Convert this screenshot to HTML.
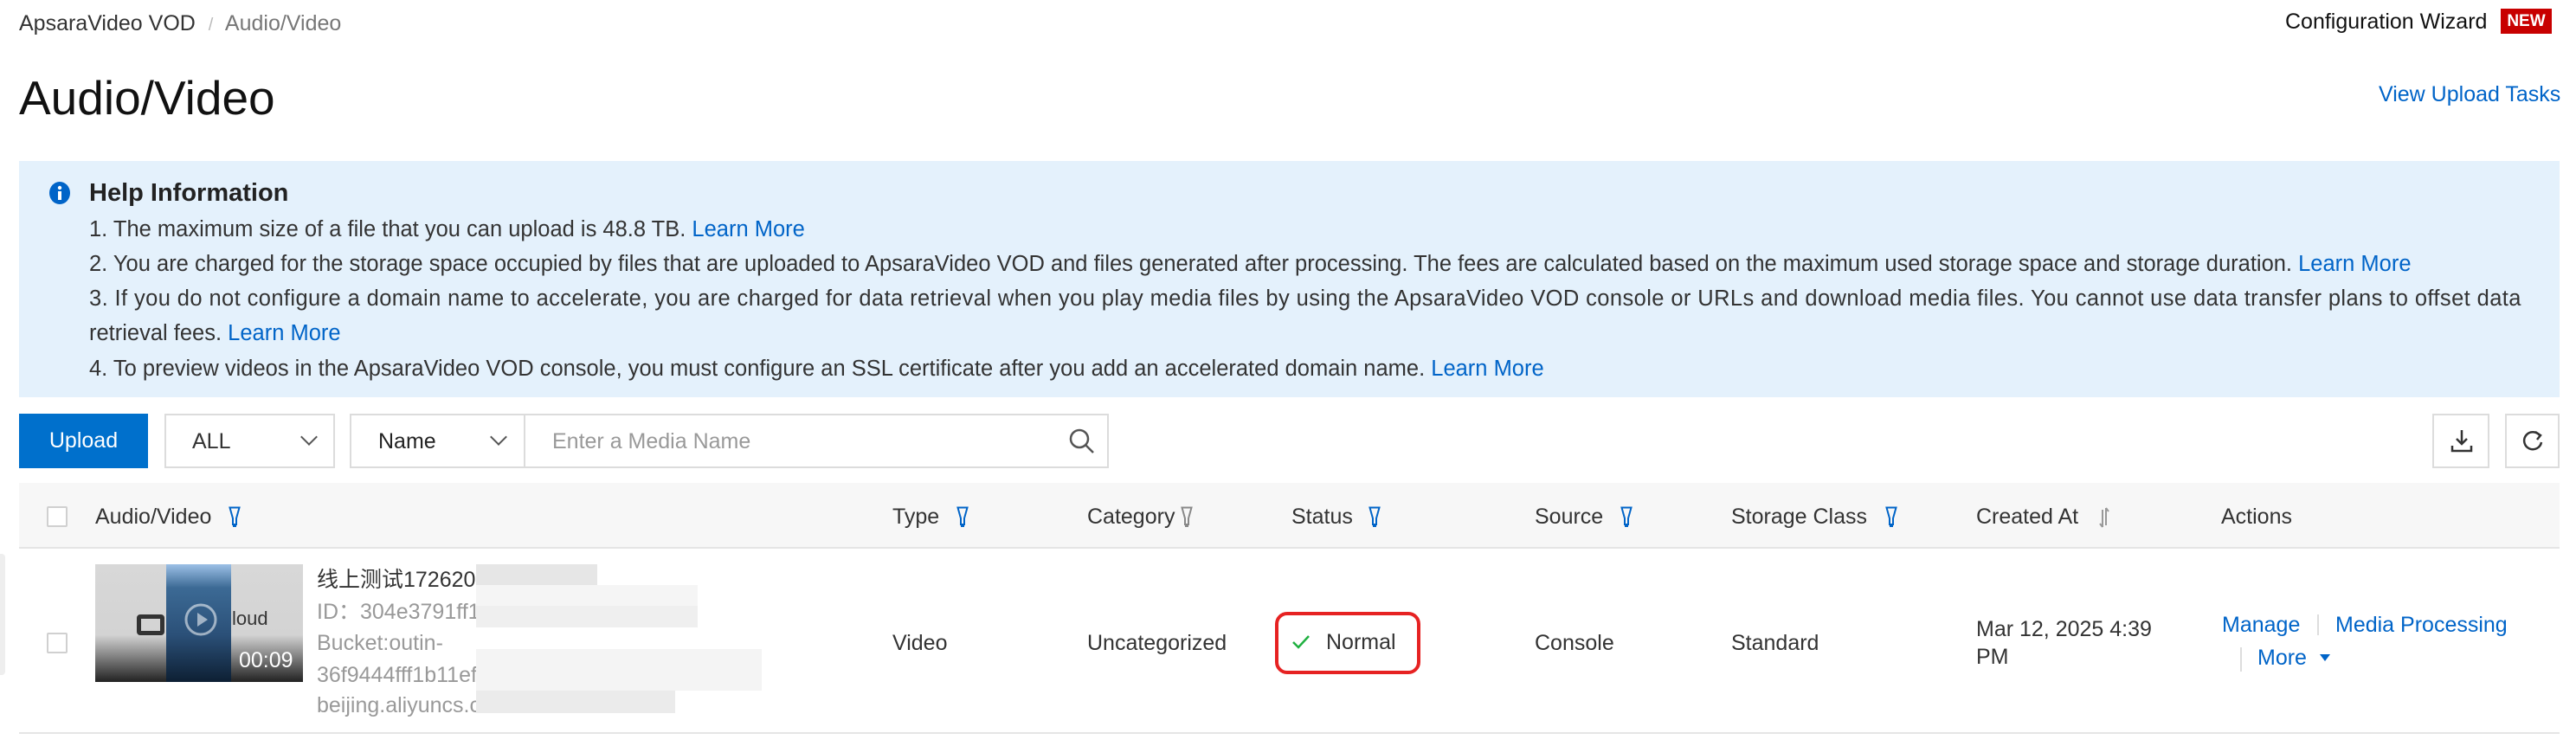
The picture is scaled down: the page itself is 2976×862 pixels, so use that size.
<!DOCTYPE html>
<html><head><meta charset="utf-8">
<style>
*{box-sizing:border-box;margin:0;padding:0}
body{width:2976px;height:862px;background:#fff;font-family:"Liberation Sans","Noto Sans CJK SC",sans-serif;color:#333;position:relative;overflow:hidden;font-size:25px}
.a{position:absolute;white-space:nowrap}
.blue{color:#0064c8}
.hl{line-height:40px;font-size:25.5px}
.sel{position:absolute;border:2px solid #dcdcdc;background:#fff}
.chev{position:absolute;width:14px;height:14px;border-right:2.5px solid #555;border-bottom:2.5px solid #555;transform:rotate(45deg)}
.th{position:absolute;top:582px;line-height:30px;color:#333}
.cb{position:absolute;width:24px;height:24px;border:2px solid #d0d0d0;background:#fff;border-radius:2px}
.td{position:absolute;line-height:30px}
</style></head><body>
<div class="a" style="left:22px;top:12px;line-height:30px;color:#333">ApsaraVideo VOD <span style="color:#bbb;margin:0 8px;font-size:20px">/</span> <span style="color:#777">Audio/Video</span></div>
<div class="a" style="left:2640px;top:10px;line-height:30px;font-size:25px;color:#111">Configuration Wizard</div>
<div class="a" style="left:2889px;top:10px;width:59px;height:29px;background:#c80000;color:#fff;font-weight:bold;font-size:19px;line-height:29px;text-align:center">NEW</div>
<div class="a" style="left:22px;top:82px;font-size:55px;line-height:62px;color:#111">Audio/Video</div>
<div class="a blue" style="left:2748px;top:94px;line-height:30px">View Upload Tasks</div>

<div class="a" style="left:22px;top:186px;width:2935px;height:273px;background:#e4f1fc"></div>
<svg class="a" style="left:56px;top:209px" width="26" height="28" viewBox="0 0 26 28"><ellipse cx="13" cy="14" rx="12" ry="13" fill="#0064c8"/><rect x="11" y="12" width="4" height="10" fill="#fff"/><circle cx="13" cy="8" r="2.2" fill="#fff"/></svg>
<div class="a" style="left:103px;top:206px;font-size:29px;font-weight:bold;line-height:34px;color:#222">Help Information</div>
<div class="a hl" style="left:103px;top:245px">1. The maximum size of a file that you can upload is 48.8 TB. <span class="blue">Learn More</span></div>
<div class="a hl" style="left:103px;top:285px">2. You are charged for the storage space occupied by files that are uploaded to ApsaraVideo VOD and files generated after processing. The fees are calculated based on the maximum used storage space and storage duration. <span class="blue">Learn More</span></div>
<div class="a hl" style="left:103px;top:325px;letter-spacing:0.4px">3. If you do not configure a domain name to accelerate, you are charged for data retrieval when you play media files by using the ApsaraVideo VOD console or URLs and download media files. You cannot use data transfer plans to offset data</div>
<div class="a hl" style="left:103px;top:365px">retrieval fees. <span class="blue">Learn More</span></div>
<div class="a hl" style="left:103px;top:406px">4. To preview videos in the ApsaraVideo VOD console, you must configure an SSL certificate after you add an accelerated domain name. <span class="blue">Learn More</span></div>

<div class="a" style="left:22px;top:478px;width:149px;height:63px;background:#0070cc;color:#fff;font-size:25px;line-height:63px;text-align:center">Upload</div>
<div class="sel" style="left:190px;top:478px;width:197px;height:63px"><span class="a" style="left:30px;top:15px;line-height:30px">ALL</span><div class="chev" style="left:158px;top:18px"></div></div>
<div class="sel" style="left:404px;top:478px;width:877px;height:63px"><span class="a" style="left:31px;top:15px;line-height:30px;color:#222">Name</span><div class="chev" style="left:163px;top:18px"></div><div style="position:absolute;left:199px;top:0;width:2px;height:59px;background:#dcdcdc"></div><span class="a" style="left:232px;top:15px;line-height:30px;color:#999">Enter a Media Name</span>
<svg class="a" style="left:828px;top:14px" width="32" height="32" viewBox="0 0 32 32"><circle cx="13" cy="13" r="10" fill="none" stroke="#555" stroke-width="2.5"/><line x1="20.5" y1="20.5" x2="29" y2="29" stroke="#555" stroke-width="2.5"/></svg></div>
<div class="sel" style="left:2810px;top:478px;width:66px;height:63px"><svg class="a" style="left:18px;top:15px" width="28" height="30" viewBox="0 0 28 30"><path d="M14 2V18M8 12L14 18L20 12M3 20V26H25V20" fill="none" stroke="#333" stroke-width="2.5"/></svg></div>
<div class="sel" style="left:2894px;top:478px;width:63px;height:63px"><svg class="a" style="left:16px;top:15px" width="28" height="30" viewBox="0 0 28 30"><path d="M22 8A10 10 0 1 0 24 16" fill="none" stroke="#333" stroke-width="2.5"/><path d="M17 4L23 8L19 13" fill="none" stroke="#333" stroke-width="2.5"/></svg></div>

<div class="a" style="left:22px;top:558px;width:2935px;height:76px;background:#f7f7f7;border-bottom:2px solid #e5e5e5"></div>
<div class="cb" style="left:54px;top:585px"></div>
<div class="th" style="left:110px">Audio/Video</div>
<div class="th" style="left:1031px">Type</div>
<div class="th" style="left:1256px">Category</div>
<div class="th" style="left:1492px">Status</div>
<div class="th" style="left:1773px">Source</div>
<div class="th" style="left:2000px">Storage Class</div>
<div class="th" style="left:2283px">Created At</div>
<div class="th" style="left:2566px">Actions</div>
<svg class="a" style="left:264px;top:585px" width="14" height="25" viewBox="0 0 14 25"><path d="M1.5 1.5H12.5L9 14V21H5V14Z" fill="none" stroke="#0064c8" stroke-width="2"/><rect x="5" y="21" width="4" height="3" fill="#0064c8"/></svg>
<svg class="a" style="left:1105px;top:585px" width="14" height="25" viewBox="0 0 14 25"><path d="M1.5 1.5H12.5L9 14V21H5V14Z" fill="none" stroke="#0064c8" stroke-width="2"/><rect x="5" y="21" width="4" height="3" fill="#0064c8"/></svg>
<svg class="a" style="left:1364px;top:585px" width="14" height="25" viewBox="0 0 14 25"><path d="M1.5 1.5H12.5L9 14V21H5V14Z" fill="none" stroke="#888" stroke-width="2"/><rect x="5" y="21" width="4" height="3" fill="#888"/></svg>
<svg class="a" style="left:1581px;top:585px" width="14" height="25" viewBox="0 0 14 25"><path d="M1.5 1.5H12.5L9 14V21H5V14Z" fill="none" stroke="#0064c8" stroke-width="2"/><rect x="5" y="21" width="4" height="3" fill="#0064c8"/></svg>
<svg class="a" style="left:1872px;top:585px" width="14" height="25" viewBox="0 0 14 25"><path d="M1.5 1.5H12.5L9 14V21H5V14Z" fill="none" stroke="#0064c8" stroke-width="2"/><rect x="5" y="21" width="4" height="3" fill="#0064c8"/></svg>
<svg class="a" style="left:2178px;top:585px" width="14" height="25" viewBox="0 0 14 25"><path d="M1.5 1.5H12.5L9 14V21H5V14Z" fill="none" stroke="#0064c8" stroke-width="2"/><rect x="5" y="21" width="4" height="3" fill="#0064c8"/></svg>
<svg class="a" style="left:2424px;top:585px" width="14" height="26" viewBox="0 0 14 26"><path d="M5 4V24M5 24L2 20M9 2V22M9 2L12 6" fill="none" stroke="#999" stroke-width="2"/></svg>

<div class="a" style="left:0;top:640px;width:6px;height:140px;background:#eee;border-radius:0 4px 4px 0"></div>
<div class="cb" style="left:54px;top:731px"></div>
<div class="a" style="left:110px;top:652px;width:240px;height:136px;background:linear-gradient(#d8d8d8 0%,#d3d3d3 60%,#222 100%)"></div>
<div class="a" style="left:192px;top:652px;width:75px;height:136px;background:linear-gradient(#9cc0e6 0%,#3c6a95 20%,#2b5078 60%,#0d1f33 100%)"></div>
<div class="a" style="left:158px;top:710px;width:32px;height:24px;border:5px solid #333;border-radius:4px"></div>
<div class="a" style="left:268px;top:700px;font-size:22px;line-height:30px;color:#333">loud</div>
<svg class="a" style="left:213px;top:697px" width="38" height="38" viewBox="0 0 38 38"><circle cx="19" cy="19" r="17" fill="none" stroke="rgba(255,255,255,.55)" stroke-width="3"/><path d="M15 11L27 19L15 27Z" fill="rgba(255,255,255,.55)"/></svg>
<div class="a" style="left:276px;top:748px;font-size:25px;line-height:30px;color:#fff">00:09</div>

<div class="td" style="left:366px;top:655px;color:#333">线上测试172620</div>
<div class="td" style="left:366px;top:692px;color:#999">ID：304e3791ff1</div>
<div class="td" style="left:366px;top:728px;color:#999">Bucket:outin-</div>
<div class="td" style="left:366px;top:765px;color:#999">36f9444fff1b11ef</div>
<div class="td" style="left:366px;top:800px;color:#999">beijing.aliyuncs.c</div>
<div class="a" style="left:550px;top:652px;width:140px;height:24px;background:#e6e6e6"></div>
<div class="a" style="left:550px;top:676px;width:256px;height:48px;background:#f5f5f5"></div>
<div class="a" style="left:550px;top:700px;width:256px;height:25px;background:#efefef"></div>
<div class="a" style="left:550px;top:750px;width:330px;height:48px;background:#f4f4f4"></div>
<div class="a" style="left:550px;top:798px;width:230px;height:26px;background:#ebebeb"></div>

<div class="td" style="left:1031px;top:728px">Video</div>
<div class="td" style="left:1256px;top:728px">Uncategorized</div>
<div class="a" style="left:1473px;top:707px;width:168px;height:72px;border:4px solid #e62222;border-radius:14px"></div>
<svg class="a" style="left:1492px;top:733px" width="22" height="18" viewBox="0 0 22 18"><path d="M2 9L8 15L20 2" fill="none" stroke="#1fb040" stroke-width="2.5"/></svg>
<div class="td" style="left:1532px;top:727px">Normal</div>
<div class="td" style="left:1773px;top:728px">Console</div>
<div class="td" style="left:2000px;top:728px">Standard</div>
<div class="td" style="left:2283px;top:712px">Mar 12, 2025 4:39</div>
<div class="td" style="left:2283px;top:744px">PM</div>
<div class="td blue" style="left:2567px;top:707px">Manage</div>
<div class="a" style="left:2677px;top:710px;width:2px;height:24px;background:#ddd"></div>
<div class="td blue" style="left:2698px;top:707px">Media Processing</div>
<div class="a" style="left:2588px;top:748px;width:2px;height:28px;background:#ddd"></div>
<div class="td blue" style="left:2608px;top:745px">More</div>
<div class="a" style="left:2680px;top:756px;width:0;height:0;border-left:6px solid transparent;border-right:6px solid transparent;border-top:8px solid #0064c8"></div>
<div class="a" style="left:22px;top:846px;width:2935px;height:2px;background:#e5e5e5"></div>
</body></html>
